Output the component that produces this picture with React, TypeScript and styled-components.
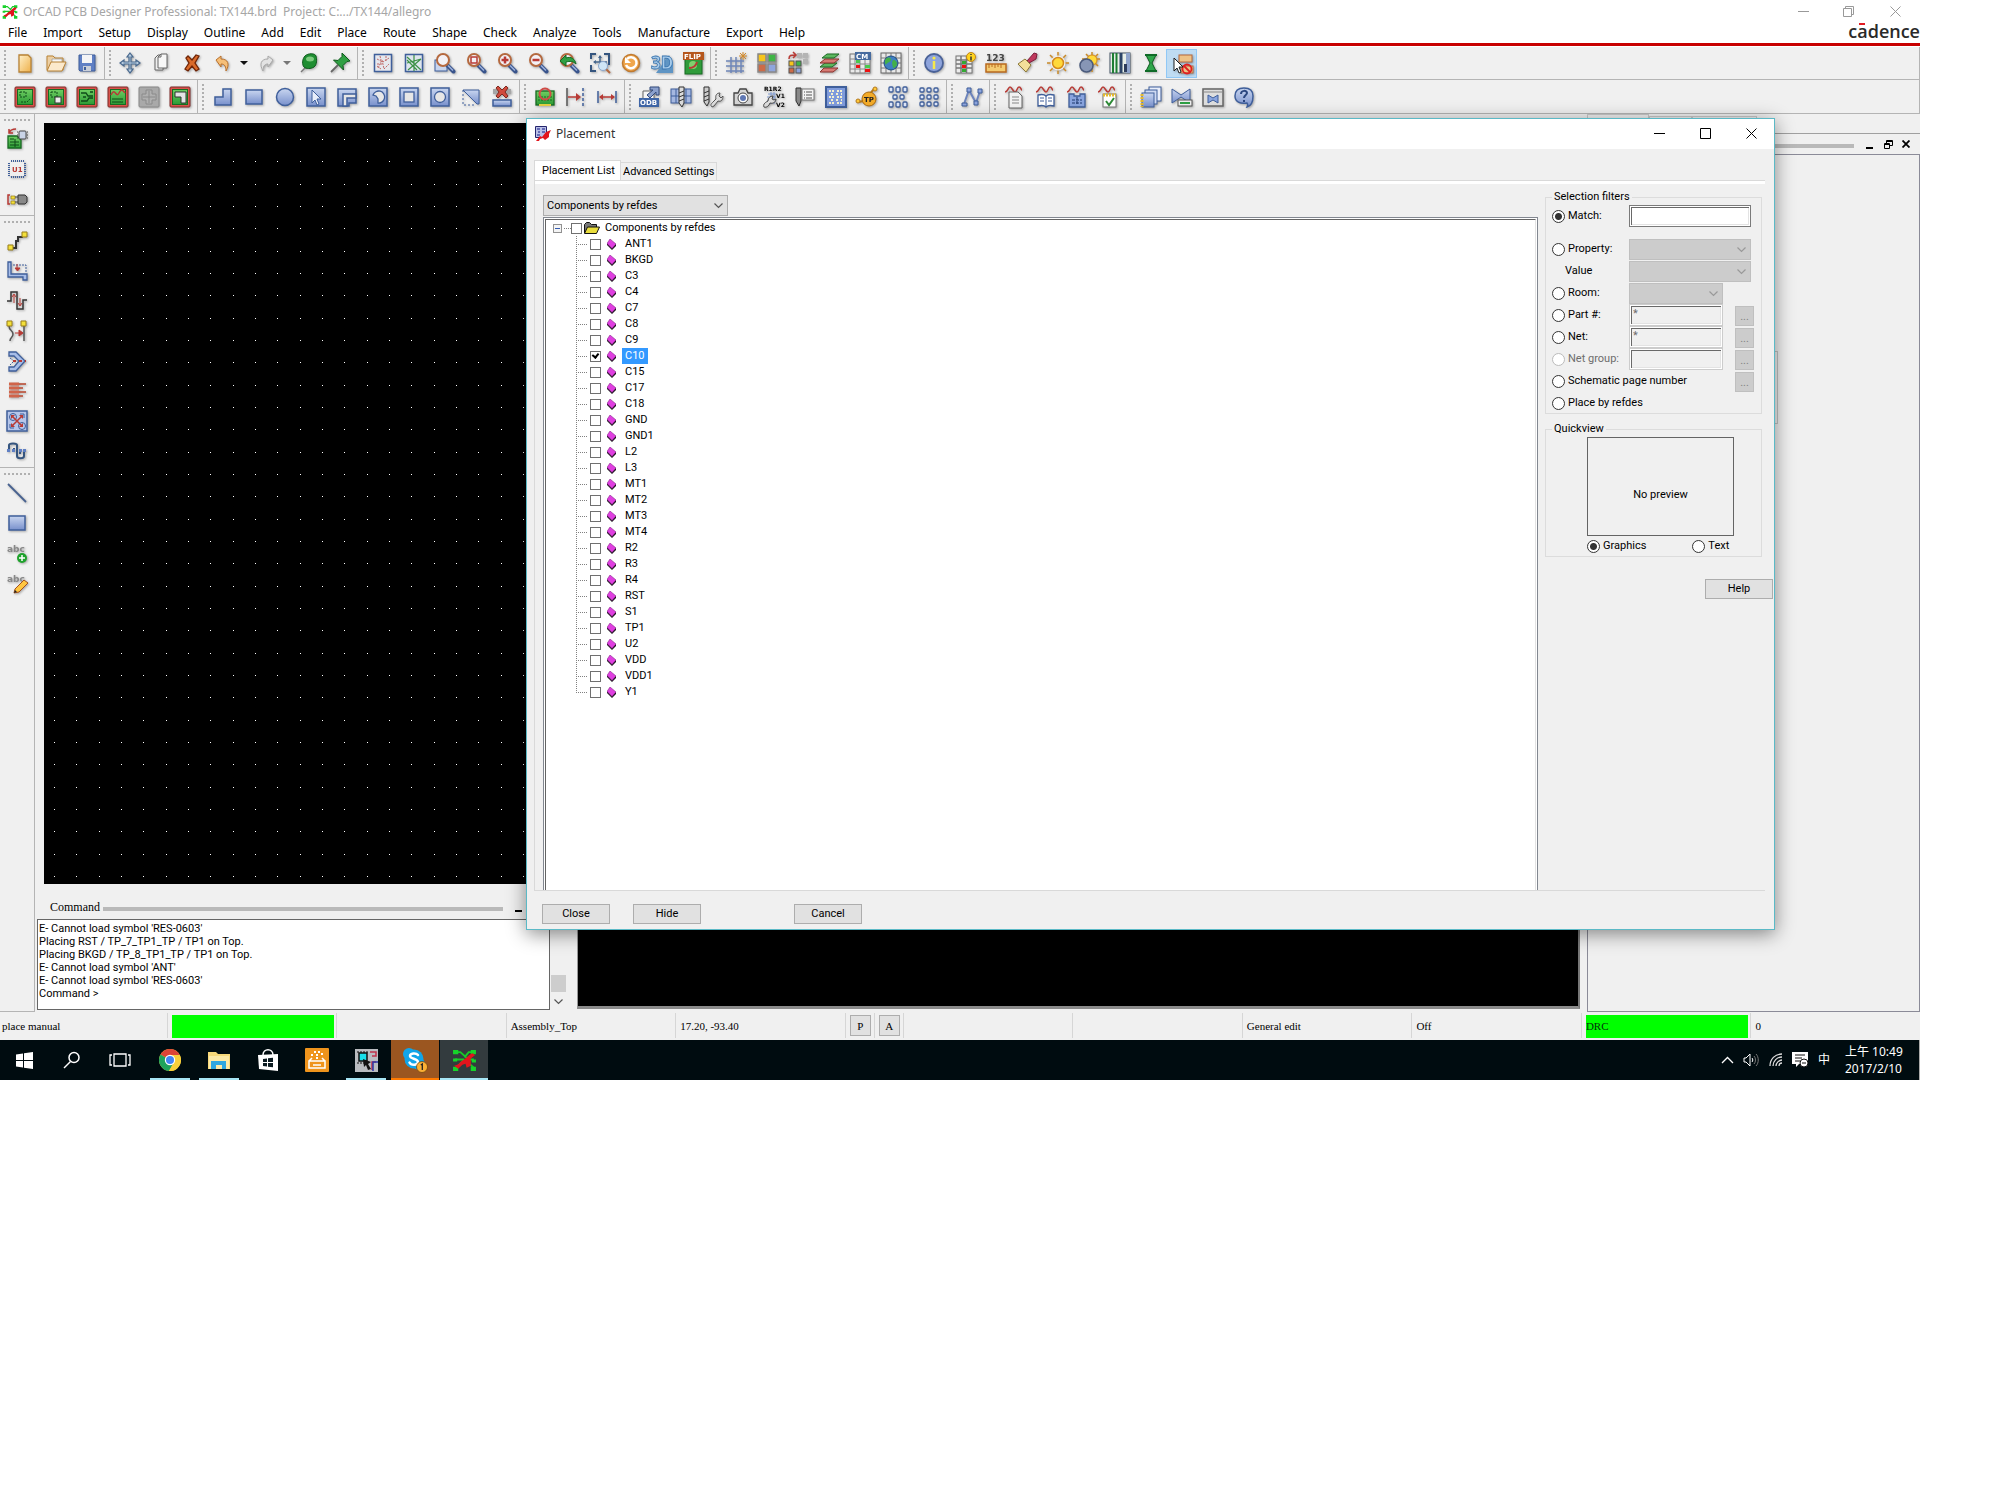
import React, { useState } from "react";
import type { ReactNode } from "react";
import styled, { createGlobalStyle, css } from "styled-components";

const GlobalStyle = createGlobalStyle`
  *, *::before, *::after { box-sizing: border-box; }
  body { margin: 0; background: #fff; color: #000; font-family: Roboto, "Noto Sans", sans-serif; font-size: 11px; }
  button, input, select { font: inherit; color: inherit; margin: 0; padding: 0; border-radius: 0; }
  ul { list-style: none; margin: 0; padding: 0; }
  svg { display: block; flex: none; }
`;

const ui = `"Noto Sans", "Noto Sans CJK TC", sans-serif`;
const serif = `"Liberation Serif", "Noto Sans CJK TC", serif`;

/* ---------- icon drawings (24 x 24 grid) ---------- */

const B = "#3f5f9b";
const R = "#b83a35";
const G = "#2d8a36";

const HiddenSvg = styled.svg`position: absolute; width: 0; height: 0;`;

const SharedGradients = () => (
  <HiddenSvg aria-hidden="true">
    <defs>
      <linearGradient id="blue" x1="0" y1="0" x2="0" y2="1">
        <stop offset="0" stopColor="#c9d6f0" />
        <stop offset="1" stopColor="#7890cc" />
      </linearGradient>
      <linearGradient id="green" x1="0" y1="0" x2="0" y2="1">
        <stop offset="0" stopColor="#6fce62" />
        <stop offset="1" stopColor="#2b9b35" />
      </linearGradient>
      <linearGradient id="gold" x1="0" y1="0" x2="1" y2="1">
        <stop offset="0" stopColor="#fff0c8" />
        <stop offset="1" stopColor="#eeb04a" />
      </linearGradient>
    </defs>
  </HiddenSvg>
);

const board = (inner: ReactNode) => (
  <>
    <rect x="2" y="2" width="20" height="20" rx="1" fill="#d9534c" stroke="#7d2a28" />
    <rect x="4.500" y="4.500" width="15" height="15" fill="url(#green)" stroke="#176b22" />
    {inner}
  </>
);
const magnifier = (inner: ReactNode) => (
  <>
    <path d="M14.500 14.500l6 6" stroke="#39548c" strokeWidth="4" strokeLinecap="round" />
    <path d="M15 14.500l5 5" stroke="#9db2dd" strokeWidth="1.500" />
    <circle cx="10" cy="9" r="6" fill="#f3f1f6" stroke="#b5693f" strokeWidth="2" />
    {inner}
  </>
);
const tile = (inner: ReactNode) => (
  <>
    <rect x="3" y="3" width="18" height="18" fill="url(#blue)" stroke={B} strokeWidth="1.500" />
    {inner}
  </>
);
const sheetGrid = (
  <>
    <rect x="3" y="5" width="16" height="17" fill="#ececec" stroke="#777" />
    <path d="M8 5v17M13.500 5v17M3 9h16M3 13h16M3 17h16" stroke="#777" strokeWidth="1.500" />
  </>
);
const cells = (cols: number[], rows: number[], w: number, h: number) =>
  rows.flatMap((y) =>
    cols.map((x) => (
      <rect key={`${x}-${y}`} x={x} y={y} width={w} height={h} rx="1" fill="#dfe7f8" stroke={B} strokeWidth="1.300" />
    ))
  );
const wave = <path d="M2 7c3 0 3-5 5-5s3 5 5 5 2-5 4-5 2 3 3 3" fill="none" stroke={R} strokeWidth="1.500" />;

const drawings: Record<string, ReactNode> = {
  new: <path d="M6 4h9l3 3v14H6z" fill="url(#gold)" stroke="#b98335" strokeWidth="1.300" />,
  open: (
    <>
      <path d="M3 19V5h6l2 2h8v12z" fill="#eccfa4" stroke="#b98335" />
      <path d="M8 8h10v6H8z" fill="#f7f7f7" stroke="#999" strokeWidth=".7" />
      <path d="M7 11h15l-4 9H3z" fill="#fbe9cc" stroke="#b98335" />
    </>
  ),
  save: (
    <>
      <path d="M4 4h16v16H5l-1-1z" fill="#5f7fc4" stroke={B} />
      <path d="M7 4h10v8H7z" fill="#f4f4f6" />
      <path d="M8 15h8v5H8z" fill="#c9ced8" />
      <path d="M9 16h2v3H9z" fill={B} />
    </>
  ),
  move: (
    <path
      d="M12 2l3 4h-2v5h5V9l4 3-4 3v-2h-5v5h2l-3 4-3-4h2v-5H6v2l-4-3 4-3v2h5V6H9z"
      fill="#bcd0e2" stroke="#47688e" strokeWidth="1.200"
    />
  ),
  copy: (
    <>
      <path d="M6 7l3-3h5v15H6z" fill="#eee" stroke="#666" />
      <path d="M9 6l3-3h6v14H9z" fill="#f7f7f7" stroke="#666" />
      <path d="M12 3v3H9" fill="none" stroke="#666" />
    </>
  ),
  remove: <path d="M6 7l2-2 4 4 4-5 3 1-4 7 4 6-3 2-4-5-4 5-3-2 4-6z" fill="#d96a2a" stroke="#6f2406" strokeWidth="1.300" />,
  undo: <path d="M5 9l5-4v3c7 0 9 5 5 12 0-4-1-7-5-7v3z" fill="#f6bf78" stroke="#b9702c" />,
  redo: <path d="M19 9l-5-4v3c-7 0-9 5-5 12 0-4 1-7 5-7v3z" fill="#e3e3e3" stroke="#a8a8a8" />,
  pinball: (
    <>
      <path d="M4 21l5-5" stroke="#777" strokeWidth="1.500" />
      <path d="M8 5c3-3 10-3 11 0s1 9-2 11-8 2-10 0-2-8 1-11z" fill="#1f8e32" stroke="#0d5a1b" />
      <ellipse cx="13" cy="8" rx="4" ry="2.500" fill="#7ecb7f" />
    </>
  ),
  pushpin: (
    <>
      <path d="M3 21l7-7" stroke="#666" strokeWidth="1.800" />
      <path d="M14 2l8 8-3 .5-4 4 .5 4.500-10-10 4.500.5 4-4z" fill="#2fa043" stroke="#0d5a1b" />
    </>
  ),
  ratsAll: (
    <>
      <rect x="3.500" y="3.500" width="17" height="17" fill="#e6e8ee" stroke={B} strokeWidth="1.500" />
      <path d="M6 8l6 3 6-4M7 17l4-8 2 9 5-5M9 5l1 4M6 13h5M15 5v6M6 15l4 3" fill="none" stroke="#c06a68" strokeDasharray="2 1" />
    </>
  ),
  ratsOn: (
    <>
      <rect x="3.500" y="3.500" width="17" height="17" fill="#dfe6ee" stroke={B} strokeWidth="1.500" />
      <path d="M5 6l14 13M12 4v16M5 12l14-4M6 19L19 8M5 9l10 10" stroke="#3c9146" strokeWidth="1.200" />
    </>
  ),
  zoomArea: (
    <>
      <rect x="2" y="9" width="12" height="11" fill="#c9d5ee" stroke={B} />
      {magnifier(null)}
    </>
  ),
  zoomFit: magnifier(<rect x="7" y="6" width="6" height="6" fill="none" stroke={R} strokeWidth="1.500" />),
  zoomIn: magnifier(<path d="M10 5.500v7M6.500 9h7" stroke={R} strokeWidth="2.500" />),
  zoomOut: magnifier(<path d="M6.500 9h7" stroke={R} strokeWidth="2.500" />),
  zoomPrev: magnifier(<path d="M3 10l6-6v3c5-2 9 1 10 6-3-3-6-3-10-2v4z" fill="#2fa043" stroke="#136b22" />),
  zoomSel: (
    <>
      <path d="M3 8V3h5M16 3h5v5M3 14v6h5M21 8v6" fill="none" stroke="#35557f" strokeWidth="2" />
      <path d="M12 5v12M6 11h13" stroke="#47688e" strokeWidth="1.500" />
      <path d="M12 4l-2 3h4zM5 11l3-2v4z" fill="#47688e" />
      <path d="M18 18l4 4" stroke="#b5693f" strokeWidth="2" />
      <circle cx="15" cy="15" r="4.500" fill="#cfe5f6" stroke="#8aa6cc" />
    </>
  ),
  refresh: (
    <>
      <circle cx="12" cy="12" r="8.500" fill="#f0a64c" stroke="#c07a30" strokeWidth="1.500" />
      <path d="M8 8a5.500 5.500 0 1 1-1 6" fill="none" stroke="#fff" strokeWidth="2.500" />
      <path d="M6 6v6h6z" fill="#fff" />
    </>
  ),
  threeD: (
    <>
      <path d="M6 22h17V12l-4-8z" fill="#5f95c4" />
      <text x="1" y="18" fontFamily="Open Sans" fontSize="17" fontWeight="700" fill="#a9cdec" stroke="#3b76b0" strokeWidth=".8">3D</text>
    </>
  ),
  flip: (
    <>
      <rect x="4" y="8" width="17" height="15" fill="#2f9b3a" stroke="#176b22" />
      <circle cx="12" cy="14" r="4" fill="#7fd06e" />
      <path d="M8 17c5 0 7-2 8-6" fill="none" stroke={R} strokeWidth="2" />
      <rect x="2" y="1" width="21" height="8" fill="#b5561c" />
      <text x="3" y="8" fontFamily="DejaVu Sans" fontSize="7" fontWeight="700" fill="#fff">FLIP</text>
    </>
  ),
  grid: (
    <>
      <path d="M7 6v16M12 6v16M17 6v16M2 10h18M2 15h18M2 20h18" stroke="#6f86b8" strokeWidth="1.500" />
      <path d="M19 1v8M15 5h8M16 2l6 6M22 2l-6 6" stroke="#d48a2a" />
    </>
  ),
  colors: (
    <>
      <rect x="3" y="3" width="8" height="8" fill="#f7c51c" stroke="#888" strokeWidth="1.500" />
      <rect x="13" y="3" width="8" height="8" fill="#3fb546" stroke="#888" strokeWidth="1.500" />
      <rect x="3" y="13" width="8" height="8" fill="#cc6b48" stroke="#888" strokeWidth="1.500" />
      <rect x="13" y="13" width="8" height="8" fill="#8ea5dd" stroke="#888" strokeWidth="1.500" />
    </>
  ),
  swap: (
    <>
      <path d="M11 2h5v5h-5zM17 2h5v5h-5zM17 8h5v5h-5z" fill="#b4b4b4" />
      <rect x="3" y="10" width="5" height="5" fill="#f7c51c" stroke="#555" />
      <rect x="10" y="10" width="5" height="5" fill="#3fb546" stroke="#555" />
      <rect x="3" y="17" width="5" height="5" fill="#cc6b48" stroke="#555" />
      <rect x="10" y="17" width="5" height="5" fill="#8ea5dd" stroke="#555" />
      <path d="M3 8c0-4 2-4 6-4M7 1l3 3-3 3" fill="none" stroke={R} strokeWidth="1.500" />
    </>
  ),
  layers: (
    <>
      <path d="M3 21l4-4h14l-5 4z" fill="#d67b74" stroke="#8c332e" />
      <path d="M3 16l5-4h12l-5 4z" fill="#5cb75f" stroke="#1d6b25" />
      <path d="M3 12l5-4h14l-5 4z" fill="#d67b74" stroke="#8c332e" />
      <path d="M5 7l5-4h12l-5 4z" fill="#5cb75f" stroke="#1d6b25" />
    </>
  ),
  constraint: (
    <>
      <rect x="2" y="3" width="20" height="19" fill="#e9e9e9" stroke="#777" />
      <path d="M7 3v19M12 8v14M17 8v14M2 8h20M2 13h20M2 18h20" stroke="#888" />
      <path d="M8 9h4v3H8zM17 14h5v3h-5z" fill="#4ac84e" />
      <path d="M8 14h4v3H8zM17 18h5v3h-5z" fill="#e11" />
      <path d="M7 1h16v8H7z" fill="#456a9e" />
      <text x="8" y="8" fontFamily="DejaVu Sans" fontSize="7" fontWeight="700" fill="#fff">CM</text>
    </>
  ),
  globe: (
    <>
      <rect x="2" y="2" width="20" height="20" fill="#e9e9e9" stroke="#666" />
      <path d="M7 2v20M12 2v20M17 2v20M2 7h20M2 12h20M2 17h20" stroke="#777" />
      <circle cx="12" cy="12" r="7" fill="#3f7fc0" stroke="#1f4a80" />
      <path d="M8 7c3-1 4 0 4 2s-4 2-5 5c-2-3-1-6 1-7zM14 9c3 0 4 2 4 4s-2 4-4 4c0-3-2-4 0-8z" fill="#43b04a" />
    </>
  ),
  info: (
    <>
      <circle cx="12" cy="12" r="9" fill="#8ea4dc" stroke="#4a6298" strokeWidth="1.800" />
      <path d="M12 10v8" stroke="#f6e84a" strokeWidth="2.500" />
      <circle cx="12" cy="7" r="1.600" fill="#f6e84a" />
    </>
  ),
  gridInfo: (
    <>
      {sheetGrid}
      <path d="M9 14h4v3H9z" fill="#e11" />
      <path d="M9 10h4v3H9zM9 18h4v3H9z" fill="#3a3" />
      <circle cx="18" cy="6" r="4.500" fill="#ffd41e" stroke="#c0841c" />
      <path d="M18 3v1M18 5.500v4" stroke="#333" strokeWidth="1.500" />
    </>
  ),
  measure: (
    <>
      <text x="2" y="10" fontFamily="DejaVu Sans" fontSize="9" fontWeight="700" fill="#444">123</text>
      <rect x="2" y="13" width="20" height="8" fill="#f4cb70" stroke="#b96a1f" strokeWidth="1.500" />
      <path d="M5 13v4M8 13v3M11 13v4M14 13v3M17 13v4" stroke="#b96a1f" />
    </>
  ),
  brush: (
    <>
      <path d="M12 10l7-8 3 1-1 5-7 4z" fill="#c0395e" stroke="#7c1e3a" />
      <path d="M10 8l6 6-5 7-8-8z" fill="#f3df9a" stroke="#8d7a3a" />
    </>
  ),
  sun: (
    <>
      <path d="M12 1v22M1 12h22M4 4l16 16M20 4L4 20" stroke="#c98a2a" strokeWidth="1.500" />
      <circle cx="12" cy="12" r="7.500" fill="#efefef" />
      <circle cx="12" cy="12" r="5.500" fill="#ffd93a" stroke="#d48a1c" strokeWidth="1.500" />
    </>
  ),
  eclipse: (
    <>
      <path d="M15 1v20M5 8h18M9 3l12 12M21 3L9 15" stroke="#c98a2a" strokeWidth="1.500" />
      <circle cx="15" cy="9" r="5" fill="#ffd93a" stroke="#d48a1c" />
      <circle cx="9.500" cy="14.500" r="6.500" fill="#8796b5" stroke="#4a5a7c" strokeWidth="1.500" />
    </>
  ),
  stripes: (
    <>
      <rect x="2" y="2" width="20" height="20" fill="#e8efe8" stroke="#456" />
      <path d="M5 2v20M8.500 2v20" stroke="#1d7d33" strokeWidth="2" />
      <path d="M13 2v20" stroke="#2c4468" strokeWidth="3" />
      <path d="M18 2h4v20h-4z" fill="#8fa4cc" />
      <path d="M16 13h3v8h-3z" fill="#2c3c5c" />
    </>
  ),
  hourglass: (
    <>
      <path d="M7 4h10l-4 8 4 8H7l4-8z" fill="#2fa64b" stroke="#0c5a20" />
      <path d="M6 4h12M6 20h12" stroke="#0f6b28" strokeWidth="2" />
    </>
  ),
  shapeStop: (
    <>
      <rect x="9" y="4" width="13" height="7" fill="#edc287" stroke="#b5693f" />
      <rect x="11" y="15" width="12" height="7" fill="#edc287" stroke="#b5693f" />
      <circle cx="17" cy="18" r="4.500" fill="none" stroke="#e02020" strokeWidth="1.800" />
      <path d="M14 15l6 6" stroke="#e02020" strokeWidth="1.800" />
      <path d="M4 7v13l3-3 2 5 2-1-2-5h4z" fill="#fff" stroke="#222" />
    </>
  ),
  boardVia: board(<path d="M7 7h6v5H7zM8 17h6l3-3" fill="none" stroke="#0e4a18" strokeDasharray="2 1" />),
  boardPad: board(<><path d="M7 7h6v5H7z" fill="none" stroke="#0e4a18" strokeDasharray="2 1" /><rect x="11" y="12" width="6" height="6" fill="#eee" stroke="#333" /></>),
  boardNet: board(<path d="M6 8h5l2 3h5M6 16h6l2-3h4M15 7h3M8 12h3" fill="none" stroke="#0e4a18" strokeWidth="1.300" />),
  boardWave: board(<><path d="M5 10c4-9 5 4 8-2 2-4 3-4 6 0" fill="none" stroke={R} strokeWidth="1.500" /><path d="M6 14h11M6 17h11" stroke="#0e4a18" /></>),
  boardOff: (
    <>
      <rect x="2" y="2" width="20" height="20" rx="1" fill="#a9a9a9" stroke="#888" />
      <path d="M9 5h6v4h4v6h-4v4H9v-4H5V9h4z" fill="#b0b0b0" stroke="#8a8a8a" />
      <path d="M12 6v12M6 12h12" stroke="#8a8a8a" />
    </>
  ),
  boardShape: board(<path d="M7 7h11v11h-5v-6H7z" fill="#e4e4e4" stroke="#333" />),
  polyL: <path d="M12 4h8v16H4v-8h8z" fill="url(#blue)" stroke={B} strokeWidth="1.500" />,
  rect: <rect x="4" y="5" width="16" height="14" fill="url(#blue)" stroke={B} strokeWidth="1.500" />,
  circle: <circle cx="12" cy="12" r="8.500" fill="url(#blue)" stroke={B} strokeWidth="1.500" />,
  select: tile(<path d="M8 5v13l3-3 2 5 2-1-2-5h4z" fill="#e9eefa" stroke={B} />),
  corner: (
    <>
      <path d="M3 4h18v14h-7v3H3z" fill="url(#blue)" stroke={B} strokeWidth="1.500" />
      <path d="M8 21V9h13v4h-9v8z" fill="#e6e6e6" stroke={B} strokeWidth="1.500" />
    </>
  ),
  voidArc: tile(<path d="M7 10a6 6 0 1 1 5 8v-4l-2-3z" fill="#e8e8e8" stroke={B} strokeWidth="1.300" />),
  voidRect: tile(<rect x="7" y="7" width="10" height="10" fill="#e6e6e6" stroke={B} strokeWidth="1.300" />),
  voidCircle: tile(<circle cx="12" cy="12" r="5.500" fill="#e6e6e6" stroke={B} strokeWidth="1.300" />),
  slice: (
    <>
      <path d="M4 5h16v14h-2z" fill="url(#blue)" stroke={B} />
      <path d="M4 5v15h13" fill="none" stroke={B} strokeDasharray="2 2" />
    </>
  ),
  deleteIsland: (
    <>
      <path d="M3 4h18v5H3z" fill="#a6a6a6" />
      <rect x="3" y="15" width="18" height="6" fill="url(#blue)" stroke={B} strokeWidth="1.500" />
      <path d="M8 1l4 4 4-4 2 2-3 4 3 4-2 2-4-4-4 4-2-2 3-4-3-4z" fill="#d14a3c" stroke="#7d2a20" />
    </>
  ),
  boardProbe: (
    <>
      <rect x="3" y="6" width="18" height="14" fill="url(#green)" stroke="#176b22" strokeWidth="1.300" />
      <path d="M5 12h14M5 15h14" stroke="#176b22" strokeDasharray="2 1" />
      <path d="M6 20h12" stroke="#e6cf46" strokeWidth="2" />
      <circle cx="12" cy="9" r="5.500" fill="none" stroke="#d04b46" strokeWidth="2" />
    </>
  ),
  alignRight: (
    <>
      <path d="M3 3v18" stroke="#555" strokeWidth="1.500" />
      <path d="M19 3v18" stroke={B} strokeWidth="1.500" strokeDasharray="3 2" />
      <path d="M4 12h10" stroke={R} strokeWidth="1.500" /><path d="M12 8l5 4-5 4z" fill={R} />
    </>
  ),
  spacing: (
    <>
      <path d="M3 6v12M21 6v12" stroke={B} strokeWidth="1.500" />
      <path d="M5 12h14" stroke={R} strokeWidth="1.500" />
      <path d="M4 12l4-3v6zM20 12l-4-3v6z" fill={R} />
    </>
  ),
  odb: (
    <>
      <path d="M5 6h11v10H5z" fill="#f5f5f5" stroke="#666" />
      <path d="M9 10l6-5h-3V2h9v8h-3V7l-6 6z" fill="#8ba0cc" stroke="#334a7c" />
      <rect x="1" y="13" width="20" height="9" fill="#3f66a8" />
      <text x="2" y="20" fontFamily="DejaVu Sans" fontSize="7" fontWeight="700" fill="#fff">ODB</text>
    </>
  ),
  drill: (
    <>
      <rect x="2" y="4" width="20" height="14" fill="#a6b8e0" stroke={B} />
      <path d="M2 11h20M7 4v14M17 4v14" stroke={B} />
      <path d="M10 2h5v16l-2 4-3-4z" fill="#ddd" stroke="#333" />
      <path d="M10 8l5-2M10 12l5-2M10 16l5-2" stroke="#333" />
    </>
  ),
  drillWrench: (
    <>
      <path d="M4 2h5v15l-2 4-3-4z" fill="#ccc" stroke="#333" />
      <path d="M4 8l5-2M4 12l5-2M4 16l5-2" stroke="#333" />
      <path d="M12 22c-2-2-1-3 1-5l3-3c-1-4 1-6 4-6l-1 3 2 2 2-2c0 4-2 6-5 5l-4 5z" fill="#ddd" stroke="#555" />
    </>
  ),
  camera: (
    <>
      <path d="M3 8h4l2-4h6l2 4h4v12H3z" fill="#d6d6d6" stroke="#444" strokeWidth="1.300" />
      <circle cx="12" cy="13" r="5" fill="#fff" stroke="#444" />
      <circle cx="12" cy="13" r="3" fill="#5f78b4" />
    </>
  ),
  rename: (
    <>
      <path d="M6 9h8M9 7v12M12 7v12M5 12h9M5 16h9" fill="none" stroke="#7f9ad0" />
      <path d="M2 22c-1-2 0-4 4-6 0-3 2-5 5-5l-1 3 2 1 2-1c0 3-3 5-6 4-1 3-4 5-6 4z" fill="#ddd" stroke="#444" />
      <text x="2" y="6" fontFamily="DejaVu Sans" fontSize="6" fontWeight="700" fill="#000">R1R2</text>
      <text x="14" y="13" fontFamily="DejaVu Sans" fontSize="6" fontWeight="700" fill="#000">V1</text>
      <text x="14" y="22" fontFamily="DejaVu Sans" fontSize="6" fontWeight="700" fill="#000">V2</text>
    </>
  ),
  drillLegend: (
    <>
      <path d="M3 3h5v13l-2 5-3-5z" fill="#888" stroke="#333" />
      <rect x="9" y="4" width="12" height="11" fill="#f4f4f4" stroke="#777" />
      <path d="M13 7h6M13 10h6M13 13h6M11 7h1M11 10h1M11 13h1" stroke="#555" />
    </>
  ),
  matrix: (
    <>
      <rect x="2" y="2" width="20" height="20" fill="#7f9bdc" stroke={B} strokeWidth="2" />
      <path d="M5 6h14M5 12h14M5 18h14" stroke="#f4f0d0" strokeWidth="2" strokeDasharray="2 1 2 3" />
      <path d="M7 9h11M7 15h11" stroke="#f4f0d0" strokeWidth="2" strokeDasharray="2 3" />
    </>
  ),
  testPoint: (
    <>
      <path d="M4 17l8-2M14 10l5-6" stroke="#b5791c" strokeWidth="2" />
      <circle cx="3" cy="16" r="2" fill="#ffc93a" stroke="#b5791c" />
      <circle cx="20" cy="4" r="2" fill="#ffc93a" stroke="#b5791c" />
      <circle cx="14" cy="14" r="7" fill="#f3ab28" stroke="#a86a12" />
      <text x="9" y="17" fontFamily="DejaVu Sans" fontSize="7" fontWeight="700" fill="#222">TP</text>
    </>
  ),
  arrayA: <>{cells([3, 10, 17], [2, 17], 4, 5)}{cells([7, 14], [10], 4, 4)}</>,
  arrayB: <>{cells([3, 10, 17], [3, 10, 17], 4, 4)}</>,
  netSchedule: (
    <>
      <path d="M4 19L9 5l7 13 4-12" fill="none" stroke="#6d84bc" strokeWidth="2" />
      <path d="M2 18h5v3H2zM7 3h4v4H7zM14 16h4v4h-4zM18 4h4v4h-4z" fill="#8ea5dd" stroke={B} />
    </>
  ),
  reportPage: (<>{wave}<path d="M6 7h9l4 4v12H6z" fill="#f2f2f2" stroke="#666" /><path d="M9 12h7M9 15h7M9 18h7" stroke="#888" /></>),
  reportBook: (<>{wave}<path d="M4 10c4-1 7 0 8 1 1-1 4-2 8-1v11c-4-1-7 0-8 1-1-1-4-2-8-1z" fill="#fff" stroke={B} strokeWidth="1.300" /><path d="M12 11v11M6 13h4M6 16h4M14 13h4M14 16h4" stroke={B} /></>),
  reportCells: (<>{wave}<path d="M4 9h5v2h6V9h5v13H4z" fill="#89a4de" stroke={B} strokeWidth="1.300" /><path d="M7 15h10M12 12v8M7 18h10" stroke="#203a70" strokeDasharray="3 1" /></>),
  reportCheck: (<>{wave}<rect x="7" y="9" width="13" height="13" fill="#fff" stroke="#777" /><path d="M7 10h13" stroke="#e5b92c" strokeWidth="3" strokeDasharray="2 1" /><path d="M10 16l3 4 5-7" fill="none" stroke={G} strokeWidth="2" /></>),
  windows: (
    <>
      <rect x="10" y="2" width="12" height="14" fill="#e9eefa" stroke={B} />
      <rect x="6" y="5" width="12" height="14" fill="#cfdaf2" stroke={B} />
      <rect x="3" y="8" width="12" height="14" fill="url(#blue)" stroke={B} />
      <path d="M3 9v13" stroke="#e5b92c" strokeWidth="3" strokeDasharray="2 1" />
    </>
  ),
  waveGreen: (
    <>
      <path d="M2 4l9 6 9-6v14l-9-6-9 6z" fill="url(#blue)" stroke={B} />
      <rect x="8" y="15" width="14" height="6" fill="#eee" stroke="#555" /><path d="M10 18h10" stroke="#2fa043" strokeWidth="2" />
    </>
  ),
  waveWindow: (
    <>
      <rect x="2" y="4" width="20" height="17" fill="#dedede" stroke="#666" strokeWidth="1.500" />
      <path d="M2 7h20" stroke="#888" /><path d="M7 10l5 3 5-3v8l-5-3-5 3z" fill="#89a4de" stroke={B} />
    </>
  ),
  help: (
    <>
      <path d="M12 3c6 0 9 3 9 8 0 6-2 10-6 11 1-2 1-3 0-4-7 1-12-1-12-7 0-5 3-8 9-8z" fill="url(#blue)" stroke={B} strokeWidth="1.500" />
      <path d="M9 9c0-4 6-4 6-1 0 2-3 2-3 5M12 15v2" fill="none" stroke="#2c4780" strokeWidth="2" />
    </>
  ),
  placeManual: (
    <>
      <path d="M3 9h9l4 4v8H3z" fill="url(#green)" stroke="#176b22" strokeWidth="1.300" />
      <path d="M5 12h4M5 15h9M5 18h9M10 12v8" stroke="#0e4a18" />
      <rect x="14" y="4" width="7" height="8" rx="1" fill="#c9d3e6" stroke="#444" /><path d="M12 5h1M12 8h1M12 11h1M22 5h1M22 8h1M22 11h1" stroke="#444" />
      <path d="M11 2C8 2 5 3 4 6M4 2v4h4" fill="none" stroke={R} strokeWidth="1.500" />
    </>
  ),
  chip: (
    <>
      <rect x="5" y="5" width="14" height="14" fill="#efefef" />
      <path d="M6 4h13M6 20h13M4 6v13M20 6v13" stroke={B} strokeWidth="2" strokeDasharray="1 1" />
      <text x="7" y="15" fontFamily="DejaVu Sans" fontSize="7" fontWeight="700" fill={R}>U1</text>
    </>
  ),
  gate: (
    <>
      <path d="M5 8H3v9h2" fill="none" stroke={R} strokeWidth="1.500" />
      <path d="M6 9h4v3H6zM6 14h4v3H6z" fill="#f3e03a" stroke="#997f1a" strokeWidth=".7" />
      <path d="M10 10h3M10 15h3" stroke="#444" /><path d="M13 8h7l2 2v5l-2 2h-7z" fill="#888" stroke="#333" />
    </>
  ),
  connect: (
    <>
      <path d="M6 19h5v-7h2V8h5" fill="none" stroke="#333" strokeWidth="2" />
      <path d="M3 16h5v5H3zM17 3h5v5h-5z" fill="#f3e03a" stroke="#997f1a" />
    </>
  ),
  slide: (
    <>
      <path d="M3 3h3v12h16v6h-4v-3H3z" fill="#a7bde8" stroke={B} strokeWidth="1.300" />
      <path d="M8 6h13v8" fill="none" stroke={B} strokeDasharray="2 1" /><path d="M12 5v5M10 9h5l-2.500 3z" stroke={R} fill={R} />
    </>
  ),
  delayTune: (
    <>
      <path d="M2 12h4V3h6v17h6v-9h4" fill="none" stroke="#333" strokeWidth="1.500" />
      <path d="M9 14V6M15 9v7M7 8l2-3 2 3M13 14l2 3 2-3" fill="none" stroke={R} />
    </>
  ),
  vertex: (
    <>
      <path d="M4 7c0 5 4 4 4 8s-3 3-3 7M19 7v15" fill="none" stroke="#555" strokeWidth="1.500" />
      <path d="M2 2h5v5H2zM16 2h5v5h-5z" fill="#f3e03a" stroke="#997f1a" /><path d="M10 14h5M14 11l4 3-4 3z" stroke={R} fill={R} />
    </>
  ),
  smooth: (
    <>
      <path d="M4 3h7l9 9-9 10H4v-4h5l5-6-5-5H4z" fill="#a7bde8" stroke={B} strokeWidth="1.300" />
      <path d="M5 9l4 3-4 4" fill="none" stroke={B} strokeDasharray="2 1" /><path d="M8 12h13" stroke={R} strokeWidth="2" strokeDasharray="3 3" />
    </>
  ),
  fanout: (
    <>
      <path d="M4 5h10M4 9h10M4 13h10M4 17h10" stroke="#d0644a" strokeWidth="3" />
      <path d="M14 5h7M14 9h4M14 13h7M14 17h4" stroke="#b8452c" strokeWidth="1.300" />
    </>
  ),
  spread: (
    <>
      <rect x="2" y="2" width="20" height="20" fill="#b6c6ea" stroke={B} strokeWidth="1.500" />
      <circle cx="8" cy="8" r="3.500" fill="none" stroke={B} /><circle cx="17" cy="17" r="3.500" fill="none" stroke={B} />
      <path d="M15 5h4v4M5 15v4h4" fill="none" stroke={B} />
      <path d="M7 7l10 10M17 7L7 17" stroke={R} strokeWidth="1.500" /><path d="M6 6h4l-4 4zM18 6v4l-4-4zM6 18v-4l4 4zM18 18h-4l4-4z" fill={R} />
    </>
  ),
  meander: (
    <>
      <path d="M4 11V6c0-2 8-2 8 0v11c0 3 7 3 7 0v-5M9 11V9M15 12v3" fill="none" stroke="#35557f" strokeWidth="2" />
      <path d="M2 10h3v3H2zM7 10h3v3H7zM14 10h3v3h-3zM18 10h3v3h-3z" fill="#5f7fc4" />
    </>
  ),
  line: <path d="M3 3l18 18" stroke="#47618f" strokeWidth="1.800" />,
  addText: (
    <>
      <text x="2" y="11" fontFamily="DejaVu Sans" fontSize="9" fontWeight="700" fill="#888">abc</text>
      <circle cx="17" cy="17" r="5" fill="#1fa22c" /><path d="M17 14v6M14 17h6" stroke="#fff" strokeWidth="1.500" />
    </>
  ),
  editText: (
    <>
      <text x="2" y="11" fontFamily="DejaVu Sans" fontSize="9" fontWeight="700" fill="#888">abc</text>
      <path d="M9 22l1-4 9-9 4 3-9 9z" fill="#ffc640" stroke="#a4501c" /><path d="M9 22l1-3 2 2z" fill="#222" />
    </>
  ),
};

const Glyph = styled.svg`
  width: 24px;
  height: 24px;
  overflow: visible;
  filter: drop-shadow(1px 1px 1px rgba(0, 0, 0, 0.3));
`;

const Icon = ({ name }: { name: string }) => (
  <Glyph viewBox="0 0 24 24" fill="none" aria-hidden="true">{drawings[name]}</Glyph>
);

const Brand = ({ size = 18 }: { size?: number }) => (
  <svg width={size} height={size} viewBox="0 0 24 24" fill="none" aria-hidden="true">
    <path d="M3 4h5l8 7h5M3 20l7-7h4l7 6M3 11h9M20 4h-4l-4 5" stroke="#18c828" strokeWidth="1.800" />
    <path d="M1 2h5v4H1zM18 2h5v4h-5zM1 18h5v4H1zM18 18h5v4h-5zM1 10h4v3H1zM19 11h4v3h-4z" fill="#16d32a" />
    <path d="M2 17c5-1 5-3 8-5 4-2 6-6 10-7l2 2-4 3v7l-4 2-1-4-3 1-4 4z" fill="#e2141c" />
  </svg>
);

const MinIcon = () => <svg width="11" height="11" viewBox="0 0 11 11" stroke="currentColor" fill="none"><path d="M0 5.500h11" /></svg>;
const MaxIcon = () => <svg width="11" height="11" viewBox="0 0 11 11" stroke="currentColor" fill="none"><path d="M.5.5h10v10H.5z" /></svg>;
const RestoreIcon = () => <svg width="11" height="11" viewBox="0 0 11 11" stroke="currentColor" fill="none"><path d="M.5 2.500h8v8h-8zM2.500 2.500v-2h8v8h-2" /></svg>;
const CloseIcon = () => <svg width="11" height="11" viewBox="0 0 11 11" stroke="currentColor" fill="none"><path d="M.5.5l10 10M10.500.5l-10 10" /></svg>;
const Chevron = ({ color = "#555" }: { color?: string }) => (
  <svg width="9" height="6" viewBox="0 0 9 6" fill="none" stroke={color} strokeWidth="1.200"><path d="M.5.5l4 4 4-4" /></svg>
);

/* ---------- application frame ---------- */

const Page = styled.div`padding-right: 96px;`;
const AppWindow = styled.div`position: relative; background: #f0f0f0;`;

const TitleBar = styled.header`
  display: flex; align-items: center; height: 23px; padding-left: 2px;
  background: #fff; font: 12px/16px ${ui};
`;
const TitleText = styled.h1`margin: 0 auto 0 5px; font: inherit; white-space: pre; color: #a6a6a6;`;
const WindowButton = styled.button<{ $w: number; $color?: string }>`
  display: grid; place-items: center; width: ${(p) => p.$w}px; height: 20px;
  border: 0; background: none; color: ${(p) => p.$color ?? "#000"};
`;

const MenuBar = styled.nav`
  display: flex; align-items: center; height: 20px; background: #fff; font: 12px/18px ${ui};
`;
const MenuButton = styled.button`border: 0; background: none; padding: 0 8px; line-height: 18px;`;
const Logo = styled.span`
  margin: 0 0 4px auto; font: 600 18px/18px "Open Sans", sans-serif; color: #2a2a2a;
`;
const LogoA = styled.span`
  position: relative;
  &::before { content: ""; position: absolute; left: 2px; top: 4px; width: 6px; height: 2px; background: #e01b22; }
`;
const RedRule = styled.div`height: 4px; background: #c80000; border-bottom: 1px solid #fff;`;

const Toolbar = styled.div<{ $h: number }>`
  display: flex; align-items: stretch; height: ${(p) => p.$h}px; border-bottom: 1px solid #b4b4b4;
`;
const ToolGroup = styled.div<{ $vertical?: boolean; $fill?: boolean; $open?: boolean }>`
  display: flex;
  flex: ${(p) => (p.$fill ? "1" : "none")};
  ${(p) =>
    p.$vertical
      ? css`flex-direction: column; align-items: center; padding-bottom: 1px; border-bottom: ${p.$open ? 0 : 1}px solid #b4b4b4;`
      : css`align-items: center; padding: 0 2px 0 0; border-right: 1px solid #b4b4b4;`}
`;
const Grip = styled.span<{ $vertical?: boolean }>`
  flex: none;
  background-image: radial-gradient(circle, #b0b0b0 1px, transparent 1px);
  background-size: 4px 4px;
  ${(p) =>
    p.$vertical
      ? css`width: 28px; height: 4px; margin: 4px 0 2px;`
      : css`width: 4px; height: 28px; margin: 0 2px 0 3px;`}
`;
const ToolButton = styled.button<{ $active?: boolean; $vertical?: boolean }>`
  display: grid; place-items: center; width: 31px; height: ${(p) => (p.$vertical ? 30 : 29)}px;
  border: 1px solid ${(p) => (p.$active ? "#90c8f6" : "transparent")};
  background: ${(p) => (p.$active ? "#bfdcf3" : "none")};
`;
const DropArrow = styled.button<{ $muted?: boolean }>`
  width: 12px; height: 28px; border: 0; background: none; display: grid; place-items: center;
  &::after {
    content: ""; border: 4px solid transparent; border-bottom: 0;
    border-top-color: ${(p) => (p.$muted ? "#777" : "#111")};
  }
`;

type ToolsProps = { names: string[]; vertical?: boolean; fill?: boolean; open?: boolean; active?: string };

const Tools = ({ names, vertical, fill, open, active }: ToolsProps) => (
  <ToolGroup $vertical={vertical} $fill={fill} $open={open} role="group">
    <Grip $vertical={vertical} />
    {names.map((n) => (
      <React.Fragment key={n}>
        <ToolButton $vertical={vertical} $active={n === active} aria-label={n}><Icon name={n} /></ToolButton>
        {(n === "undo" || n === "redo") && <DropArrow $muted={n === "redo"} aria-label={`${n} history`} />}
      </React.Fragment>
    ))}
  </ToolGroup>
);

/* ---------- workspace ---------- */

const Workspace = styled.main`display: flex; height: 899px; padding-bottom: 1px;`;
const SideBar = styled.aside`width: 35px; border-right: 1px solid #b4b4b4; border-bottom: 1px solid #b4b4b4;`;
const LeftColumn = styled.section`
  display: flex; flex-direction: column; width: 532px; padding: 9px 0 2px 2px;
`;
const BoardCanvas = styled.svg`width: 100%; height: 761px; padding-left: 7px; flex: none;`;
const DockHeader = styled.div`
  display: flex; align-items: center; gap: 3px; height: 35px; padding: 11px 45px 0 13px; font: 12px/14px ${serif};
`;
const DockBar = styled.span`flex: 1; height: 4px; margin-top: 4px; background: #b9b9b9;`;
const DockMin = styled.button`
  width: 7px; height: 10px; border: 0; border-bottom: 2px solid #000; background: none; margin-left: 9px;
`;
const ConsoleRow = styled.div`display: flex; flex: 1;`;
const Console = styled.div`
  flex: 1; background: #fff; border: 1px solid #666; padding: 2px 1px; line-height: 13px;
`;
const ScrollTrack = styled.div`
  display: flex; flex-direction: column; justify-content: flex-end; align-items: center; width: 17px; padding-bottom: 5px;
`;
const ScrollThumb = styled.div`width: 15px; height: 17px; margin-bottom: 7px; background: #cdcdcd;`;
const MainView = styled.section`
  flex: 1; margin: 9px 7px 3px 10px; background: #000;
  border: solid; border-width: 1px 2px 3px 1px; border-color: #fff #777 #8b8b8b #999;
`;
const RightColumn = styled.section`display: flex; flex-direction: column; width: 333px;`;
const PanelTabs = styled.div`display: flex; align-items: flex-end; height: 20px; border-bottom: 1px solid #a0a0a0;`;
const PanelTab = styled.div<{ $w: number; $front?: boolean }>`
  width: ${(p) => p.$w}px; height: ${(p) => (p.$front ? 19 : 17)}px; border: 1px solid #c8c8c8; border-bottom: 0;
`;
const PanelHeader = styled.div`
  display: flex; align-items: center; gap: 8px; height: 20px; padding: 0 9px 0 10px;
`;
const PanelBar = styled.span`flex: 1; height: 4px; margin: 4px 3px 0 0; background: #b9b9b9;`;
const PanelBody = styled.div`flex: 1; border: 1px solid #8b8b98; padding-top: 196px;`;
const PanelBox = styled.div`width: 190px; height: 73px; border: 1px solid #c4c4c4;`;

const StatusBar = styled.footer`
  display: flex; align-items: stretch; height: 27px; padding: 0 0 2px; font: 11px/14px ${serif};
`;
const StatusCell = styled.div<{ $w?: number }>`
  display: flex; align-items: center; flex: ${(p) => (p.$w ? `0 0 ${p.$w}px` : "1 1 0")};
  padding: 0 2px 0 4px; border-left: 1px solid #d6d6d6;
  &:first-child { border-left: 0; padding-left: 2px; }
`;
const Lamp = styled.span`
  flex: 1; align-self: stretch; display: flex; align-items: center; margin-top: 2px; padding-bottom: 2px; background: #0f0; color: #03300a;
`;
const StatusButton = styled.button`
  width: 21px; height: 21px; border: 1px solid #adadad; background: #e1e1e1;
`;

/* ---------- placement dialog ---------- */

const Dialog = styled.section`
  position: absolute; top: 118px; left: 526px; right: 145px; height: 812px;
  display: flex; flex-direction: column; border: 1px solid #5bb9c6; background: #f0f0f0;
  box-shadow: 0 4px 18px rgba(0, 0, 0, 0.45);
`;
const DialogTitle = styled.div`
  display: flex; align-items: center; height: 30px; padding: 0 0 1px 8px; background: #fff; font: 12px/16px ${ui};
  h2 { margin: 0 auto 0 5px; font: inherit; color: #333; }
`;
const TabStrip = styled.div`display: flex; align-items: flex-end; height: 31px; padding-left: 7px;`;
const Tab = styled.button<{ $front?: boolean }>`
  height: ${(p) => (p.$front ? 20 : 18)}px; padding: ${(p) => (p.$front ? "0 5px 0 7px" : "0 2px")};
  border: 1px solid #d9d9d9; border-bottom: 0; border-left-width: ${(p) => (p.$front ? 1 : 0)}px;
  background: ${(p) => (p.$front ? "#fff" : "#f0f0f0")}; line-height: 14px;
`;
const TabPage = styled.div`
  display: flex; flex: 1; min-height: 0; margin: 0 9px 0 7px; border: 1px solid #d9d9d9; border-right: 0;
  box-shadow: inset 0 3px 0 #fff;
`;
const ListPane = styled.div`display: flex; flex-direction: column; flex: 1; padding: 14px 0 0 8px; min-width: 0;`;
const SelectBox = styled.div<{ $w: number; $disabled?: boolean }>`
  position: relative; flex: none; width: ${(p) => p.$w}px; height: 21px; line-height: 13px;
  border: 1px solid ${(p) => (p.$disabled ? "#bfbfbf" : "#adadad")};
  background: ${(p) => (p.$disabled ? "#ccc" : "#e1e1e1")};
  select { appearance: none; width: 100%; height: 100%; padding: 0 20px 0 3px; border: 0; background: none; }
  svg { position: absolute; right: 4px; top: 7px; pointer-events: none; }
`;
const TreeFrame = styled.div`
  flex: 1; min-height: 0; margin-top: 1px; border: 1px solid #828790; border-bottom: 0; background: #fff; padding: 1px 1px 0;
`;
const Tree = styled.ul`height: 100%; padding: 0 0 0 7px; border-left: 1px solid #646464; border-top: 1px solid #646464; border-right: 1px solid #e3e3e3;`;
const TreeRow = styled.label<{ $leaf?: boolean }>`
  display: flex; align-items: center; height: 16px; gap: ${(p) => (p.$leaf ? 6 : 2)}px; line-height: 16px;
`;
const Leaf = styled.li`
  margin-left: 23px; height: 16px; background-image: repeating-linear-gradient(#808080 0 1px, transparent 1px 2px);
  background-size: 1px 100%; background-repeat: no-repeat;
  &:last-child { background-size: 1px 8px; }
`;
const Branch = styled.span<{ $w: number; $pull?: boolean }>`
  width: ${(p) => p.$w}px; height: 1px; margin-right: ${(p) => (p.$pull ? -3 : -2)}px;
  background: repeating-linear-gradient(90deg, #808080 0 1px, transparent 1px 2px);
`;
const Expander = styled.button`
  display: grid; place-items: center; width: 9px; height: 9px; border: 1px solid #919191; background: #f4f4f4;
  &::after { content: ""; width: 5px; height: 1px; background: #335bb0; }
`;
const Check = styled.input`
  appearance: none; position: relative; flex: none; width: 11px; height: 11px; border: 1px solid #707070; background: #fff;
  &:checked::after {
    content: ""; position: absolute; left: 2px; top: 0; width: 5px; height: 6px;
    border: solid #000; border-width: 0 2px 2px 0; transform: rotate(40deg);
  }
`;
const RowText = styled.span<{ $selected?: boolean }>`
  padding: 0 3px;
  background: ${(p) => (p.$selected ? "#3399ff" : "none")}; color: ${(p) => (p.$selected ? "#fff" : "#000")};
`;

const SidePane = styled.div`width: 227px; padding: 9px 3px 0 7px; flex: none;`;
const Group = styled.fieldset<{ $gap?: number; $h: number }>`
  margin: 0 0 ${(p) => p.$gap ?? 0}px; padding: 0 7px 0 6px; height: ${(p) => p.$h}px; border: 1px solid #dcdcdc; min-width: 0;
  legend { padding: 0 2px; line-height: 14px; }
`;
const FilterRow = styled.div<{ $first?: boolean }>`
  display: flex; align-items: center; height: 22px; margin: ${(p) => (p.$first ? "1px 0 11px" : 0)};
`;
const RadioLabel = styled.label<{ $muted?: boolean; $w?: number; $indent?: number }>`
  display: flex; align-items: center; gap: 3px; line-height: 14px; white-space: nowrap;
  padding-left: ${(p) => p.$indent ?? 0}px;
  width: ${(p) => (p.$w ? `${p.$w}px` : "auto")}; color: ${(p) => (p.$muted ? "#6d6d6d" : "#000")};
`;
const Radio = styled.input`
  appearance: none; flex: none; width: 13px; height: 13px; border: 1px solid #333; border-radius: 50%; background: #fff;
  &:checked { background: radial-gradient(circle, #333 3px, #fff 4px); }
  &:disabled { border-color: #bbb; }
`;
const Field = styled.input<{ $w: number }>`
  width: ${(p) => p.$w}px; height: 22px; padding: 0 3px 4px; border: 1px solid #7a7a7a; background: #fff;
  box-shadow: inset 0 0 0 1px #fff, inset 2px 2px 0 #696969, inset -2px -2px 0 #e3e3e3;
  &:disabled { border-color: #ccc; background: #f0f0f0; color: #6d6d6d; }
`;
const MoreButton = styled.button`
  width: 19px; height: 20px; margin: 2px 0 0 auto; border: 1px solid #bfbfbf; background: #ccc; color: #838383;
`;
const Preview = styled.div`
  display: grid; place-items: center; height: 99px; width: 147px; margin: 1px 0 0 35px; padding-top: 16px; border: 1px solid #646464;
`;
const PreviewOptions = styled.div`display: flex; gap: 46px; margin: 3px 0 0 35px;`;
const PushButton = styled.button<{ $w: number }>`
  width: ${(p) => p.$w}px; height: 20px; border: 1px solid #adadad; background: #e1e1e1; line-height: 14px;
`;
const HelpSlot = styled.div`display: flex; justify-content: flex-end; margin: 22px -11px 0 0;`;
const DialogFooter = styled.div`
  display: flex; gap: 23px; height: 38px; padding: 13px 0 0 15px;
  button:last-child { margin-left: 70px; }
`;

const components = [
  "ANT1", "BKGD", "C3", "C4", "C7", "C8", "C9", "C10", "C15", "C17", "C18", "GND", "GND1", "L2", "L3",
  "MT1", "MT2", "MT3", "MT4", "R2", "R3", "R4", "RST", "S1", "TP1", "U2", "VDD", "VDD1", "Y1",
];

const PartIcon = () => (
  <svg width="9" height="11" viewBox="0 0 9 11"><path d="M0 4v2l5 5 4-4V5z" fill="#111" /><path d="M3 0l6 5-4 4.500-5-5z" fill="#df3fe0" stroke="#8a2a8c" strokeWidth=".6" /></svg>
);
const FolderIcon = () => (
  <svg width="16" height="12" viewBox="0 0 16 12" stroke="#111"><path d="M.5 11V2.500l2-2h3l2 2h5V5" fill="#777" /><path d="M.5 11.500l3-6.500h12l-3 6.500z" fill="#e9dd3c" /></svg>
);
const PlacementIcon = () => (
  <svg width="16" height="16" viewBox="0 0 16 16"><path d="M.5.5h11v11H.5z" fill="#b9bfe6" stroke="#24246c" /><path d="M2 3h3M7 3h3M3 6h2M7 6h3M2 9h3" stroke="#4a52a8" strokeWidth="1.500" /><path d="M1 15l4-5 2 1 4-5 5-2-2 4v3l-4 3-2-2-3 1-1 2z" fill="#e2141c" /></svg>
);

function PlacementDialog() {
  const [checked, setChecked] = useState<Record<string, boolean>>({ C10: true });
  const [filter, setFilter] = useState("Match:");
  const radio = (name: string, disabled = false, w?: number) => (
    <RadioLabel $w={w} $muted={disabled}>
      <Radio type="radio" name="filter" disabled={disabled} checked={filter === name} onChange={() => setFilter(name)} />
      {name}
    </RadioLabel>
  );
  return (
    <Dialog role="dialog" aria-labelledby="placement-title">
      <DialogTitle>
        <PlacementIcon />
        <h2 id="placement-title">Placement</h2>
        <WindowButton $w={45} aria-label="Minimize"><MinIcon /></WindowButton>
        <WindowButton $w={46} aria-label="Maximize"><MaxIcon /></WindowButton>
        <WindowButton $w={46} aria-label="Close window"><CloseIcon /></WindowButton>
      </DialogTitle>
      <TabStrip role="tablist">
        <Tab $front role="tab" aria-selected="true">Placement List</Tab>
        <Tab role="tab" aria-selected="false">Advanced Settings</Tab>
      </TabStrip>
      <TabPage>
        <ListPane>
          <SelectBox $w={185}>
            <select aria-label="List contents"><option>Components by refdes</option></select>
            <Chevron />
          </SelectBox>
          <TreeFrame>
            <Tree>
              <li>
                <TreeRow>
                  <Expander aria-label="Collapse" />
                  <Branch $w={7} />
                  <Check type="checkbox" />
                  <FolderIcon />
                  <RowText>Components by refdes</RowText>
                </TreeRow>
                <ul>
                  {components.map((c) => (
                    <Leaf key={c}>
                      <TreeRow $leaf>
                        <Branch $w={11} $pull />
                        <Check type="checkbox" checked={!!checked[c]} onChange={() => setChecked({ ...checked, [c]: !checked[c] })} />
                        <PartIcon />
                        <RowText $selected={c === "C10"}>{c}</RowText>
                      </TreeRow>
                    </Leaf>
                  ))}
                </ul>
              </li>
            </Tree>
          </TreeFrame>
        </ListPane>
        <SidePane>
          <Group $h={224} $gap={8}>
            <legend>Selection filters</legend>
            <FilterRow $first>{radio("Match:", false, 77)}<Field $w={122} aria-label="Match" /></FilterRow>
            <FilterRow>{radio("Property:", false, 77)}<SelectBox $w={122} $disabled><select disabled aria-label="Property" /><Chevron color="#999" /></SelectBox></FilterRow>
            <FilterRow><RadioLabel htmlFor="value" $w={77} $indent={13}>Value</RadioLabel><SelectBox $w={122} $disabled><select id="value" disabled /><Chevron color="#999" /></SelectBox></FilterRow>
            <FilterRow>{radio("Room:", false, 77)}<SelectBox $w={94} $disabled><select disabled aria-label="Room" /><Chevron color="#999" /></SelectBox></FilterRow>
            <FilterRow>{radio("Part #:", false, 77)}<Field $w={94} disabled defaultValue="*" aria-label="Part number" /><MoreButton disabled>...</MoreButton></FilterRow>
            <FilterRow>{radio("Net:", false, 77)}<Field $w={94} disabled defaultValue="*" aria-label="Net" /><MoreButton disabled>...</MoreButton></FilterRow>
            <FilterRow>{radio("Net group:", true, 77)}<Field $w={94} disabled aria-label="Net group" /><MoreButton disabled>...</MoreButton></FilterRow>
            <FilterRow>{radio("Schematic page number")}<MoreButton disabled>...</MoreButton></FilterRow>
            <FilterRow>{radio("Place by refdes")}</FilterRow>
          </Group>
          <Group $h={135}>
            <legend>Quickview</legend>
            <Preview>No preview</Preview>
            <PreviewOptions>
              <RadioLabel><Radio type="radio" name="preview" defaultChecked />Graphics</RadioLabel>
              <RadioLabel><Radio type="radio" name="preview" />Text</RadioLabel>
            </PreviewOptions>
          </Group>
          <HelpSlot><PushButton $w={68}>Help</PushButton></HelpSlot>
        </SidePane>
      </TabPage>
      <DialogFooter>
        <PushButton $w={68}>Close</PushButton>
        <PushButton $w={68}>Hide</PushButton>
        <PushButton $w={68}>Cancel</PushButton>
      </DialogFooter>
    </Dialog>
  );
}

/* ---------- taskbar ---------- */

const TaskBar = styled.footer`
  display: flex; align-items: stretch; height: 40px; background: #000c10; color: #fff; font: 12px/17px ${ui};
`;
const SystemButtons = styled.div`display: flex; padding-right: 1px;`;
const TaskButton = styled.button<{ $bg?: string; $line?: string; $full?: boolean; $first?: boolean }>`
  position: relative; display: grid; place-items: center; width: 48px; margin-left: ${(p) => (p.$first ? 0 : 1)}px;
  border: 0; background: ${(p) => p.$bg ?? "none"};
  &::after {
    content: ""; position: absolute; bottom: 0; height: 2px; background: ${(p) => p.$line ?? "transparent"};
    left: ${(p) => (p.$full ? 0 : 4)}px; right: ${(p) => (p.$full ? 0 : 4)}px;
  }
`;
const Tray = styled.div`display: flex; align-items: center; gap: 9px; margin-left: auto; padding: 0 3px 1px 0; border-right: 1px solid #aaa;`;
const Clock = styled.div`width: 71px; margin-left: 6px; white-space: nowrap;`;

const taskIcons = {
  start: <svg width="17" height="17" viewBox="0 0 17 17" fill="#fff"><path d="M0 2.500l7-1V8H0zM8 1.300L17 0v8H8zM0 9h7v6.500l-7-1zM8 9h9v8l-9-1.300z" /></svg>,
  search: <svg width="18" height="18" viewBox="0 0 18 18" fill="none" stroke="#fff" strokeWidth="1.500"><circle cx="11" cy="6.500" r="5" /><path d="M7.500 10.500L1 17" /></svg>,
  tasks: <svg width="22" height="14" viewBox="0 0 22 14" fill="none" stroke="#fff" strokeWidth="1.300"><path d="M5 1h12v12H5zM3 2H1v10h2M19 2h2v10h-2" /></svg>,
  chrome: (
    <svg width="22" height="22" viewBox="0 0 22 22"><circle cx="11" cy="11" r="11" fill="#f8cf3a" /><path d="M11 11L1.500 5.500A11 11 0 0 1 20.500 5.500z" fill="#dc4437" /><path d="M1.500 5.500A11 11 0 0 0 10 22l5-8.500-4-2.500z" fill="#1fa35c" /><path d="M11 6h9.700A11 11 0 0 1 10 22l5-9z" fill="#f8cf3a" /><circle cx="11" cy="11" r="5.200" fill="#fff" /><circle cx="11" cy="11" r="4" fill="#4285f4" /></svg>
  ),
  folder: <svg width="22" height="19" viewBox="0 0 22 19"><path d="M0 1h8l2 2h12v15H0z" fill="#f7d97a" /><path d="M1 5h20v13H1z" fill="#fdeaa6" /><path d="M3 18V10h15v8h-4v-4H8v4z" fill="#2ea7e0" /></svg>,
  store: <svg width="22" height="24" viewBox="0 0 22 24"><path d="M6 7c0-7 10-7 10 0" fill="none" stroke="#fff" strokeWidth="1.500" /><path d="M1 7l20-1v17L2 21z" fill="#fff" /><path d="M6 11l4-.5V14H6zM11 10.300l5-.5V14h-5zM6 15h4v3.500l-4-.5zM11 15h5v4.300l-5-.6z" fill="#0a1a20" /></svg>,
  orange: <svg width="24" height="24" viewBox="0 0 24 24"><rect width="24" height="24" rx="1" fill="#ef941c" /><path d="M4 13h16v7H4zM4 13l3-3M20 13l-3-3M8 17h8" fill="none" stroke="#fff" strokeWidth="1.500" /><path d="M9 3h2v2H9zM13 3h2v2h-2zM6 6h2v2H6zM11 6h2v2h-2zM16 5h2v2h-2zM11 9h2v2h-2z" fill="#fff" /></svg>,
  pcb: <svg width="23" height="23" viewBox="0 0 23 23"><rect width="23" height="23" fill="#b9bcc0" /><path d="M15 3h6v4h-4M17 21v-8h4" fill="none" stroke="#c0304a" strokeWidth="1.500" /><path d="M18 22v-9h5" stroke="#2a36a8" fill="none" strokeWidth="1.500" /><rect x="4" y="4" width="8" height="8" fill="#19e0ea" stroke="#111" strokeWidth="1.500" /><path d="M3 2v2M6 2v2M9 2v2M12 2v2M3 13v2M6 13v2M9 13v2" stroke="#111" /><path d="M8 10l8 3-3 2 3 5-3 1-2-5-2 2z" fill="#111" /></svg>,
  skype: <svg width="26" height="26" viewBox="0 0 26 26"><circle cx="12" cy="12" r="9.500" fill="#11a5e8" /><circle cx="7" cy="7" r="6" fill="#11a5e8" /><circle cx="17" cy="17" r="6" fill="#11a5e8" /><path d="M16 8c-2-2.500-8-2-8 1s8 2.500 8 6-7 3.500-8.500.5" fill="none" stroke="#fff" strokeWidth="2.500" strokeLinecap="round" /><circle cx="20" cy="20" r="5.500" fill="#fbb034" stroke="#6a3c08" strokeWidth=".7" /><path d="M18.800 18l1.500-1v6" stroke="#222" fill="none" strokeWidth="1.300" /></svg>,
};

const boardDots: ReactNode[] = [];
for (let r = 0; r < 34; r++)
  for (let c = 0; c < 23; c++)
    boardDots.push(<rect key={`${r}-${c}`} x={Math.round(10 + (c * 67) / 3)} y={Math.round(16 + (r * 67) / 3)} width="1" height="1" fill="#fff" />);

const menus = ["File", "Import", "Setup", "Display", "Outline", "Add", "Edit", "Place", "Route", "Shape", "Check", "Analyze", "Tools", "Manufacture", "Export", "Help"];

export default function App() {
  return (
    <Page>
      <GlobalStyle />
      <SharedGradients />
      <AppWindow>
        <TitleBar>
          <Brand size={16} />
          <TitleText>{"OrCAD PCB Designer Professional: TX144.brd  Project: C:.../TX144/allegro"}</TitleText>
          <WindowButton $w={45} $color="#999" aria-label="Minimize"><MinIcon /></WindowButton>
          <WindowButton $w={45} $color="#999" aria-label="Restore"><RestoreIcon /></WindowButton>
          <WindowButton $w={49} $color="#999" aria-label="Close window"><CloseIcon /></WindowButton>
        </TitleBar>
        <MenuBar>
          {menus.map((m) => <MenuButton key={m}>{m}</MenuButton>)}
          <Logo>c<LogoA>a</LogoA>dence</Logo>
        </MenuBar>
        <RedRule />
        <Toolbar $h={33}>
          <Tools names={["new", "open", "save"]} />
          <Tools names={["move", "copy", "remove", "undo", "redo", "pinball", "pushpin"]} />
          <Tools names={["ratsAll", "ratsOn", "zoomArea", "zoomFit", "zoomIn", "zoomOut", "zoomPrev", "zoomSel", "refresh", "threeD", "flip"]} />
          <Tools names={["grid", "colors", "swap", "layers", "constraint", "globe"]} />
          <Tools fill active="shapeStop" names={["info", "gridInfo", "measure", "brush", "sun", "eclipse", "stripes", "hourglass", "shapeStop"]} />
        </Toolbar>
        <Toolbar $h={34}>
          <Tools names={["boardVia", "boardPad", "boardNet", "boardWave", "boardOff", "boardShape"]} />
          <Tools names={["polyL", "rect", "circle", "select", "corner", "voidArc", "voidRect", "voidCircle", "slice", "deleteIsland"]} />
          <Tools names={["boardProbe", "alignRight", "spacing"]} />
          <Tools names={["odb", "drill", "drillWrench", "camera", "rename", "drillLegend", "matrix", "testPoint", "arrayA", "arrayB"]} />
          <Tools names={["netSchedule"]} />
          <Tools names={["reportPage", "reportBook", "reportCells", "reportCheck"]} />
          <Tools fill names={["windows", "waveGreen", "waveWindow", "help"]} />
        </Toolbar>
        <Workspace>
          <SideBar>
            <Tools vertical names={["placeManual", "chip", "gate"]} />
            <Tools vertical names={["connect", "slide", "delayTune", "vertex", "smooth", "fanout", "spread", "meander"]} />
            <Tools vertical open names={["line", "rect", "addText", "editText"]} />
          </SideBar>
          <LeftColumn>
            <BoardCanvas aria-label="Board layout">
              <rect width="100%" height="100%" />
              {boardDots}
            </BoardCanvas>
            <DockHeader>Command<DockBar /><DockMin aria-label="Hide command window" /></DockHeader>
            <ConsoleRow>
              <Console role="log">
                <div>E- Cannot load symbol 'RES-0603'</div>
                <div>Placing RST / TP_7_TP1_TP / TP1 on Top.</div>
                <div>Placing BKGD / TP_8_TP1_TP / TP1 on Top.</div>
                <div>E- Cannot load symbol 'ANT'</div>
                <div>E- Cannot load symbol 'RES-0603'</div>
                <div>Command &gt;</div>
              </Console>
              <ScrollTrack><ScrollThumb /><Chevron /></ScrollTrack>
            </ConsoleRow>
          </LeftColumn>
          <MainView aria-label="World view" />
          <RightColumn>
            <PanelTabs><PanelTab $w={62} $front /><PanelTab $w={43} /><PanelTab $w={65} /></PanelTabs>
            <PanelHeader>
              <PanelBar />
              <WindowButton $w={10} aria-label="Minimize panel"><svg width="8" height="9"><path d="M0 8h7" stroke="#000" strokeWidth="2" /></svg></WindowButton>
              <WindowButton $w={10} aria-label="Restore panel"><svg width="9" height="9" fill="none" stroke="#000"><path d="M.5 3.500h5v5h-5zM2.500 3V.5h6v5H6M.5 4.500h5M2.500 1.500h6" /></svg></WindowButton>
              <WindowButton $w={10} aria-label="Close panel"><svg width="8" height="8" stroke="#000" strokeWidth="1.800"><path d="M.5.5l7 7M7.500.5l-7 7" /></svg></WindowButton>
            </PanelHeader>
            <PanelBody><PanelBox /></PanelBody>
          </RightColumn>
        </Workspace>
        <StatusBar>
          <StatusCell>place manual</StatusCell>
          <StatusCell><Lamp /></StatusCell>
          <StatusCell />
          <StatusCell>Assembly_Top</StatusCell>
          <StatusCell>17.20, -93.40</StatusCell>
          <StatusCell $w={29}><StatusButton>P</StatusButton></StatusCell>
          <StatusCell $w={29}><StatusButton>A</StatusButton></StatusCell>
          <StatusCell />
          <StatusCell />
          <StatusCell>General edit</StatusCell>
          <StatusCell>Off</StatusCell>
          <StatusCell><Lamp>DRC</Lamp></StatusCell>
          <StatusCell>0</StatusCell>
        </StatusBar>
        <PlacementDialog />
      </AppWindow>
      <TaskBar>
        <SystemButtons>
          <TaskButton $first aria-label="Start">{taskIcons.start}</TaskButton>
          <TaskButton $first aria-label="Search">{taskIcons.search}</TaskButton>
          <TaskButton $first aria-label="Task view">{taskIcons.tasks}</TaskButton>
        </SystemButtons>
        <TaskButton $line="#a7e6f5" aria-label="Browser">{taskIcons.chrome}</TaskButton>
        <TaskButton $line="#a7e6f5" aria-label="File explorer">{taskIcons.folder}</TaskButton>
        <TaskButton aria-label="Store">{taskIcons.store}</TaskButton>
        <TaskButton aria-label="Utility">{taskIcons.orange}</TaskButton>
        <TaskButton $line="#a7e6f5" aria-label="Capture">{taskIcons.pcb}</TaskButton>
        <TaskButton $bg="#9b5620" $line="#ff7a00" $full aria-label="Messages">{taskIcons.skype}</TaskButton>
        <TaskButton $bg="#333b3e" $line="#a7e6f5" $full aria-label="PCB Designer"><Brand size={25} /></TaskButton>
        <Tray>
          <svg width="13" height="8" viewBox="0 0 13 8" fill="none" stroke="#fff" strokeWidth="1.300"><path d="M1 7l5.500-5.500L12 7" /></svg>
          <svg width="17" height="14" viewBox="0 0 17 14" fill="none" stroke="#fff"><path d="M1 5h2l4-4v12L3 9H1zM9 5c1 1 1 3 0 4" /><path d="M11 3c2 2 2 6 0 8M13 1c3 3 3 9 0 12" stroke="#777" /></svg>
          <svg width="14" height="13" viewBox="0 0 14 13" fill="none" stroke="#ddd" strokeWidth="1.300"><path d="M1 13C1 6 6 1 13 1M4 13c0-5 4-9 9-9M7 13c0-3 3-6 6-6M10 13c0-2 1-3 3-3" /></svg>
          <svg width="17" height="16" viewBox="0 0 17 16"><path d="M0 0h16v12h-9l-3 3v-3H0z" fill="#fff" /><path d="M3 3h10M3 6h7M3 9h5" stroke="#111" /><circle cx="12" cy="11" r="4" fill="#fff" stroke="#111" /><path d="M10 11h4" stroke="#111" /></svg>
          <span>中</span>
          <Clock>上午 10:49<br />2017/2/10</Clock>
        </Tray>
      </TaskBar>
    </Page>
  );
}
